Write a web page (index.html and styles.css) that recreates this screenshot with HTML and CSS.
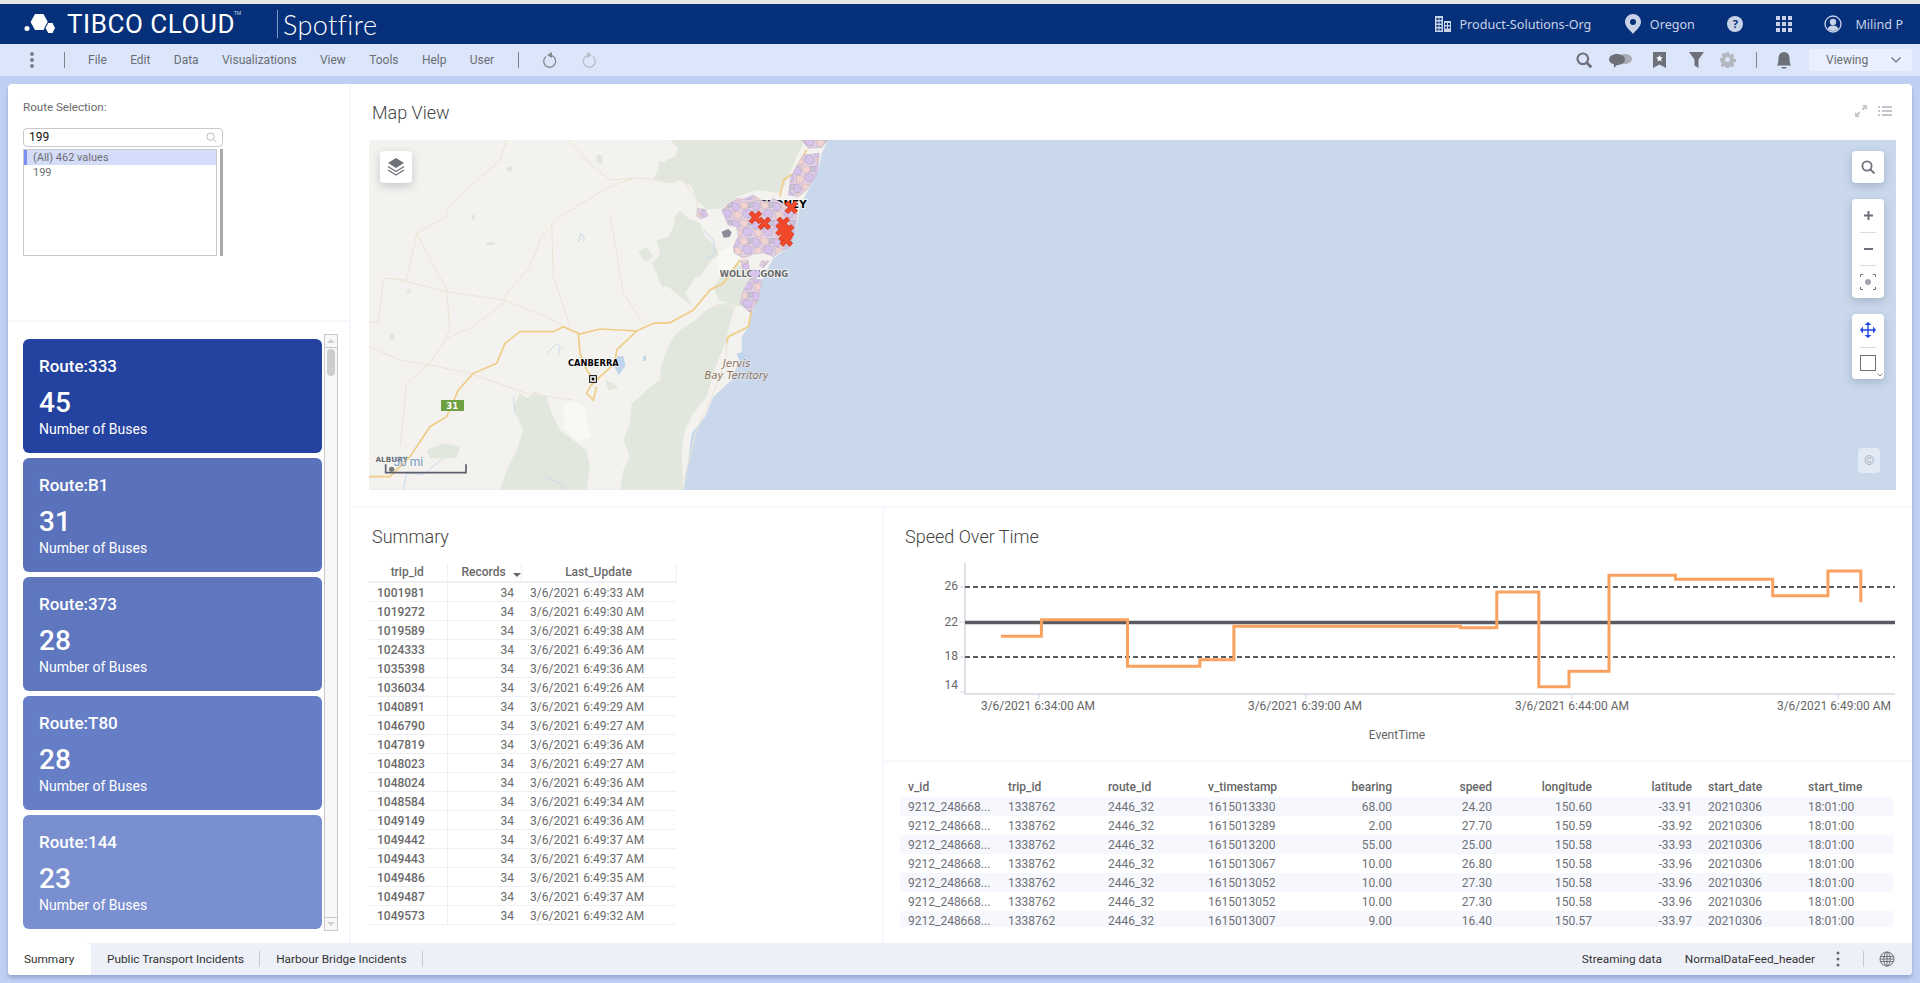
FILE: index.html
```html
<!DOCTYPE html>
<html lang="en">
<head>
<meta charset="utf-8">
<title>TIBCO Cloud Spotfire</title>
<link rel="stylesheet" href="styles.css">
</head>
<body>
<div class="app">
  <header class="topbar">
    <svg class="logo-mark" viewBox="0 0 32 20" width="32" height="20"><path fill="#fff" d="M11 1h8.500l4.300 8-4.300 8H11L6.600 9z"/><path fill="#fff" stroke="#06307a" d="M24 9.500h4.800L31.500 15l-2.700 5.500H24L21 15z"/><circle cx="3" cy="15.500" r="2.500" fill="#fff"/></svg>
    <span class="brand">TIBCO CLOUD<sup class="tm">TM</sup></span>
    <span class="brand-sep"></span>
    <span class="product">Spotfire</span>
    <nav class="top-right">
      <span class="top-item">
        <svg viewBox="0 0 17 16" width="17" height="16" fill="#c9d3e8"><path d="M1 0h8v16H1zM10 5h7v11h-7z"/><path fill="#06307a" d="M2.500 2h2v2h-2zM5.500 2h2v2h-2zM2.500 5.500h2v2h-2zM5.500 5.500h2v2h-2zM2.500 9h2v2h-2zM5.500 9h2v2h-2zM2.500 12.500h2v2h-2zM5.500 12.500h2v2h-2zM11 7h2v2h-2zM14 7h2v2h-2zM11 10.500h2v2h-2zM14 10.500h2v2h-2z"/></svg>
        Product-Solutions-Org
      </span>
      <span class="top-item">
        <svg viewBox="0 0 18 20" width="18" height="20"><path fill="#c9d3e8" d="M9 0a8 8 0 0 0-8 8c0 5 6 9 8 12 2-3 8-7 8-12a8 8 0 0 0-8-8z"/><circle cx="9" cy="8" r="3" fill="#06307a"/></svg>
        Oregon
      </span>
      <span class="help-badge">?</span>
      <svg viewBox="0 0 16 16" width="16" height="16" fill="#c9d3e8"><path d="M0 0h4v4H0zM6 0h4v4H6zM12 0h4v4h-4zM0 6h4v4H0zM6 6h4v4H6zM12 6h4v4h-4zM0 12h4v4H0zM6 12h4v4H6zM12 12h4v4h-4z"/></svg>
      <span class="top-item top-user">
        <svg viewBox="0 0 18 18" width="18" height="18"><circle cx="9" cy="9" r="8" fill="none" stroke="#c9d3e8" stroke-width="1.300"/><circle cx="9" cy="7" r="3.200" fill="#c9d3e8"/><path fill="#c9d3e8" d="M3.500 14c1-3 3-3.500 5.500-3.500s4.500.5 5.500 3.500c-3 2.500-8 2.500-11 0z"/></svg>
        Milind P
      </span>
    </nav>
  </header>

  <div class="toolbar">
    <svg class="kebab" viewBox="0 0 6 18" width="6" height="18" fill="#7b7f88"><circle cx="3" cy="3" r="2"/><circle cx="3" cy="9" r="2"/><circle cx="3" cy="15" r="2"/></svg>
    <span class="tool-sep sep-menu"></span>
    <nav class="menu">
      <span>File</span><span>Edit</span><span>Data</span><span>Visualizations</span><span>View</span><span>Tools</span><span>Help</span><span>User</span>
    </nav>
    <span class="tool-sep sep-undo"></span>
    <svg class="undo" viewBox="0 0 16 18" width="16" height="18" fill="none" stroke="#85888f" stroke-width="1.300"><path d="M4 5.500a6 6 0 1 0 6-.8"/><path fill="#85888f" stroke="none" d="M10 1v6L5 4z"/></svg>
    <svg class="redo" viewBox="0 0 16 18" width="16" height="18" fill="none" stroke="#b9bcc4" stroke-width="1.300"><path d="M12 5.500a6 6 0 1 1-6-.8"/><path fill="#b9bcc4" stroke="none" d="M6 1v6l5-3z"/></svg>
    <div class="tool-right">
      <svg viewBox="0 0 16 16" width="16" height="16" fill="none" stroke="#6e7079" stroke-width="2.200"><circle cx="6.800" cy="6.800" r="5.300"/><path d="M10.800 10.800l4.500 4.500" stroke-width="2.800"/></svg>
      <svg class="t-chat" viewBox="0 0 23 15" width="23" height="15"><ellipse cx="16" cy="6" rx="7" ry="5" fill="#a9acb5"/><path fill="#6e7079" d="M8 1c4.400 0 8 2.300 8 5.500S12.400 12 8 12l-3 3v-3.600C2 10.500 0 8.700 0 6.500 0 3.300 3.600 1 8 1z"/></svg>
      <svg class="t-mark" viewBox="0 0 13 16" width="13" height="16"><path fill="#6e7079" d="M0 0h13v16l-6.500-3.500L0 16z"/><path fill="#fff" d="M6.500 3l1 2.200 2.400.2-1.800 1.600.5 2.400-2.100-1.200-2.100 1.200.5-2.400-1.800-1.600 2.400-.2z"/></svg>
      <svg class="t-filter" viewBox="0 0 15 16" width="15" height="16"><path fill="#6e7079" d="M0 0h15L9.500 7.500V16l-4-2.500V7.500z"/></svg>
      <svg class="t-gear" viewBox="0 0 16 16" width="16" height="16"><path fill="#b4b7bf" d="M6.500 0h3l.4 2.200 1.500.7 1.900-1.200 2 2.100-1.200 1.800.7 1.500 2.200.4v3l-2.200.4-.7 1.500 1.200 1.900-2 2-1.900-1.200-1.500.7-.4 2.200h-3l-.4-2.200-1.500-.7-1.900 1.200-2-2 1.200-1.900-.7-1.500L0 9.500v-3l2.200-.4.700-1.500-1.200-1.800 2-2.100 1.900 1.200 1.500-.7z" transform="scale(.94)"/><circle cx="7.500" cy="7.500" r="2.500" fill="#dce6fb"/></svg>
      <span class="tool-sep t-sep"></span>
      <svg class="t-bell" viewBox="0 0 14 17" width="14" height="17"><path fill="#6e7079" d="M7 0a5.500 5.500 0 0 1 5.500 5.500c0 4 .5 6 1.500 8H0c1-2 1.500-4 1.500-8A5.500 5.500 0 0 1 7 0z"/><rect x="4.500" y="15" width="5" height="1.500" rx=".7" fill="#6e7079"/></svg>
      <div class="mode">Viewing
        <svg viewBox="0 0 10 6" width="10" height="6" fill="none" stroke="#6e7079" stroke-width="1.200"><path d="M.5.500L5 5 9.500.500"/></svg>
      </div>
    </div>
  </div>

  <main class="page">
    <aside class="side">
      <section class="filter">
        <div class="filter-label">Route Selection:</div>
        <div class="searchbox">199
          <svg viewBox="0 0 12 12" width="11" height="11" fill="none" stroke="#b5b5b5" stroke-width="1"><circle cx="5" cy="5" r="4"/><path d="M8 8l3.500 3.500"/></svg>
        </div>
        <div class="listwrap">
          <div class="listbox">
            <div class="opt opt-on">(All) 462 values</div>
            <div class="opt">199</div>
          </div>
          <div class="listbar"></div>
        </div>
      </section>
      <section class="kpis">
        <div class="cards">
          <article class="card c1"><div class="card-title">Route:333</div><div class="card-value">45</div><div class="card-label">Number of Buses</div></article>
          <article class="card c2"><div class="card-title">Route:B1</div><div class="card-value">31</div><div class="card-label">Number of Buses</div></article>
          <article class="card c3"><div class="card-title">Route:373</div><div class="card-value">28</div><div class="card-label">Number of Buses</div></article>
          <article class="card c4"><div class="card-title">Route:T80</div><div class="card-value">28</div><div class="card-label">Number of Buses</div></article>
          <article class="card c5"><div class="card-title">Route:144</div><div class="card-value">23</div><div class="card-label">Number of Buses</div></article>
        </div>
        <div class="vscroll">
          <div class="vs-btn"><i class="arrow-up"></i></div>
          <div class="vs-track"><div class="vs-thumb"></div></div>
          <div class="vs-btn vs-btn-end"><i class="arrow-down"></i></div>
        </div>
      </section>
    </aside>

    <div class="content">
      <section class="mapview">
        <div class="vis-head">
          <h2 class="vis-title">Map View</h2>
          <div class="vis-tools">
            <svg viewBox="0 0 12 12" width="12" height="12" fill="#c3c6cd"><path d="M7 0h5v5l-1.800-1.800L8 5.400 6.600 4l2.200-2.200zM5 12H0V7l1.800 1.800L4 6.600 5.400 8l-2.200 2.200z"/></svg>
            <svg viewBox="0 0 14 10" width="14" height="10" fill="#c3c6cd"><path d="M0 0h2v2H0zM4 0h10v2H4zM0 4h2v2H0zM4 4h10v2H4zM0 8h2v2H0zM4 8h10v2H4z"/></svg>
          </div>
        </div>
        <div class="map">
          <svg class="map-art" viewBox="0 0 1527 350" width="1527" height="350">
            <defs>
              <path id="b1" d="M0 8L7 0l11 2 7-3 10 9-4 9 4 8-10 8-10-2-9 4-6-9-6-6z"/>
              <path id="b2" d="M0 5l9-6 8 3 9-2 5 10-4 8-10 6-10-3-8-5z"/>
              <pattern id="suburbs" patternUnits="userSpaceOnUse" width="62" height="54">
                <rect width="62" height="54" fill="#e2cfe2"/>
                <path fill="#d6c2ea" stroke="#a79fb8" stroke-width="1.500" d="M0 0l16 3 8 12-10 12L0 24zM34 26l14-4 14 8-4 16-16 2-10-10z"/>
                <path fill="#f1d3d2" stroke="#bfa9b1" stroke-width="1.500" d="M24 0h20l6 14-12 8-14-7zM6 30l12-3 12 10-6 14-16-2z"/>
                <path fill="#c9c4d6" stroke="#a79fb8" stroke-width="1.500" d="M50 0h12v14l-12 4z"/>
              </pattern>
            </defs>
            <rect width="1527" height="350" fill="#c9d8eb"/>
            <g transform="translate(-9 -10) scale(.33333)">
              <path fill="#f3f2ef" d="M27 30L1405 30 1385 70 1375 120 1345 180 1320 230 1310 290 1290 350 1240 385 1205 450 1195 510 1170 555 1165 590 1145 620 1145 670 1115 750 1060 800 1035 860 995 910 985 990 970 1079 27 1079z"/>
              <g fill="#e2e7de">
                <path d="M930 30L1335 30 1310 80 1290 130 1262 190 1190 180 1130 200 1085 235 1040 240 1010 210 995 170 960 150 930 160 880 150 890 125 920 90 945 80 955 55z"/>
                <path d="M960 240L985 265 1020 280 1035 320 1060 340 1080 370 1050 395 1020 440 1005 445 975 490 1000 530 960 500 925 470 905 470 890 430 875 400 900 375 890 330 925 320 940 290 945 260z"/>
                <path d="M1080 520L1125 530 1110 580 1095 640 1075 690 1060 730 1040 800 1015 830 1000 850 975 900 965 960 970 1079 780 1079 790 1020 810 980 790 930 810 880 815 820 840 800 860 780 900 750 905 700 920 660 940 620 960 600 1000 575 1040 540z"/>
                <path d="M480 790L500 805 525 785 560 800 575 850 600 900 640 930 680 960 690 1010 680 1079 420 1079 440 1020 470 960 490 900 465 850 460 830z"/>
                <path d="M1090 430L1130 400 1190 440 1180 500 1140 530 1075 510 1060 470z"/>
                <path d="M200 960L250 940 300 950 290 985 210 985z"/>
                <path d="M835 365l25-15 20 30-25 15z"/>
                <path d="M735 750l25 10 15 15-30 5z"/>
                <path d="M440 110h18v14h-18zM335 255h10v15h-10zM88 610h16v20H88zM140 478h12v12h-12zM380 335h25v10h-25zM710 75h18v25h-18zM895 95h30v45h-30z"/>
              </g>
              <path fill="#f8f8f5" d="M1075 365l50-20 15 35-30 50-35 10zM610 830l25-20 40 20 15 90-40 15-35-40z"/>
              <g fill="none" stroke="#ebe4d4" stroke-width="3">
                <path d="M440 30L420 90 330 170 260 240 260 260 170 310 140 450 70 445 55 580 27 575"/>
                <path d="M625 30L690 100 750 150 820 145 970 150 1010 210 1015 235"/>
                <path d="M820 145L740 175 600 260 545 320 510 410 440 490 430 520 340 590 260 625 210 700 140 760 120 950"/>
                <path d="M27 650L120 690 210 705 330 730"/>
                <path d="M100 445L260 485 430 510 560 560 630 600"/>
                <path d="M170 310L260 480 270 600 255 625"/>
                <path d="M750 250l40 240 60 90M575 280L580 440 630 590"/>
                <path d="M1040 540L1100 520 1130 530M1100 620L1100 680 1060 790 1010 900 985 1000 960 1079"/>
                <path d="M660 670L680 720M330 730L500 790 640 810"/>
              </g>
              <g fill="none" stroke="#c6daee" stroke-width="3">
                <path d="M655 335l8-25 10 15-3 10M560 670l30-30 20 20M600 650l-5 25M460 800l5 50M1030 300l30 30 5 40-30 20M130 1079l10-50 50 5 60-50M560 1040l40 20 20 19"/>
              </g>
              <path fill="#bdd4ea" d="M770 680l20-2 6 30-20 28-12-25z"/>
              <path fill="#bdd4ea" d="M1130 670l20-4 8 16-20 10zM850 680l8-4v16l-8 2z"/>
              <g fill="none" stroke="#f0cd86" stroke-width="5">
                <path d="M27 1040L90 1040 150 980 210 890 260 860 295 780 340 730 410 700 435 640 480 605 580 605 610 590 660 612 720 597 830 603 880 580 930 578 1000 540 1050 480 1090 460 1140 390"/>
                <path d="M830 603L770 660 765 700 720 740 690 770 680 790 700 810 710 770"/>
                <path d="M655 612L660 670 680 720 700 745"/>
                <path d="M1175 540L1165 590 1105 620 1100 640"/>
                <path d="M1260 200L1270 150 1300 130 1340 60"/>
              </g>
              <text class="map-label-city" x="1270" y="234" text-anchor="middle">SYDNEY</text>
              <g fill="url(#suburbs)" stroke="#bfb3c8" stroke-width="1.500">
                <path d="M1085 240L1105 222 1130 205 1150 208 1180 195 1205 212 1228 215 1240 205 1272 222 1290 240 1312 250 1305 300 1290 350 1262 365 1240 380 1210 368 1180 372 1150 385 1122 368 1120 350 1135 318 1130 290 1105 285z"/>
                <path d="M1325 30L1405 30 1385 52 1345 55z"/>
                <path d="M1330 75L1378 70 1372 130 1340 180 1315 200 1285 195 1292 140z"/>
                <path d="M1172 445L1205 450 1195 510 1170 548 1140 520 1150 480z"/>
                <path d="M1012 235l24 4 8 18-20 10-14-8z"/>
                <path d="M1142 392l22-2 4 26-20 4zM1205 392l22 2-18 20-10-8z"/>
              </g>
              <path fill="#8a8d99" d="M1085 305l20-8 10 10-6 14-18 2z"/>
              <text class="map-label-town" x="1182" y="442" text-anchor="middle">WOLLONGONG</text>
              <use href="#b2" transform="translate(1170 420)" fill="#d9c6ec" stroke="#a69cc0"/>
              <g fill="none">
                <g stroke="#b8321c" stroke-width="14">
                  <path d="M1171 247l30 30m0-30l-30 30M1198 265l30 30m0-30l-30 30M1279 217l30 30m0-30l-30 30M1255 265l30 30m0-30l-30 30M1251 283l30 30m0-30l-30 30M1268 288l30 30m0-30l-30 30M1260 301l30 30m0-30l-30 30M1264 315l30 30m0-30l-30 30"/>
                </g>
                <g stroke="#f2492c" stroke-width="11">
                  <path d="M1171 247l30 30m0-30l-30 30M1198 265l30 30m0-30l-30 30M1279 217l30 30m0-30l-30 30M1255 265l30 30m0-30l-30 30M1251 283l30 30m0-30l-30 30M1268 288l30 30m0-30l-30 30M1260 301l30 30m0-30l-30 30M1264 315l30 30m0-30l-30 30"/>
                </g>
              </g>
              <text class="map-label-city map-label-cbr" x="700" y="707" text-anchor="middle">CANBERRA</text>
              <rect x="689" y="737" width="20" height="20" fill="#fff" stroke="#000" stroke-width="3"/>
              <rect x="695" y="743" width="8" height="8" fill="#000"/>
              <text class="map-label-water" x="1130" y="712" text-anchor="middle">Jervis</text>
              <text class="map-label-water" x="1130" y="747" text-anchor="middle">Bay Territory</text>
              <rect x="243" y="810" width="69" height="33" fill="#6fa142"/>
              <text class="map-label-shield" x="277" y="836" text-anchor="middle">31</text>
              <text class="map-label-small" x="95" y="997" text-anchor="middle">ALBURY</text>
              <text class="map-scale" x="100" y="1008">50 mi</text>
              <path d="M77 1003V1028H318V1003" fill="none" stroke="#5d606c" stroke-width="5"/>
              <circle cx="95" cy="1018" r="8" fill="#777"/>
            </g>
          </svg>
          <button class="ctl ctl-layers" aria-label="Layers">
            <svg viewBox="0 0 18 18" width="18" height="18"><path fill="#6e7079" d="M9 0l8 5-8 5-8-5z"/><path fill="none" stroke="#6e7079" stroke-width="1.200" d="M1 8.500l8 5 8-5M1 12l8 5 8-5"/></svg>
          </button>
          <div class="ctl-stack">
            <button class="ctl" aria-label="Search">
              <svg viewBox="0 0 14 14" width="14" height="14" fill="none" stroke="#6e7079" stroke-width="1.800"><circle cx="6" cy="6" r="4.600"/><path d="M9.500 9.500l4 4"/></svg>
            </button>
            <div class="ctl-group ctl-zoom">
              <div class="ctl-cell"><svg viewBox="0 0 9 9" width="9" height="9" fill="#6e7079"><path d="M3.500 0h2v3.500H9v2H5.500V9h-2V5.500H0v-2h3.500z"/></svg></div>
              <div class="ctl-cell"><svg viewBox="0 0 9 2" width="9" height="2" fill="#6e7079"><path d="M0 0h9v2H0z"/></svg></div>
              <div class="ctl-cell"><svg viewBox="0 0 16 16" width="16" height="16" fill="none" stroke="#6e7079"><path d="M.5 3V.500H3M13 .500h2.500V3M15.500 13v2.500H13M3 15.500H.500V13"/><circle cx="8" cy="8" r="3" fill="#a3a5ad" stroke="none"/></svg></div>
            </div>
            <div class="ctl-group ctl-pan">
              <div class="ctl-cell"><svg viewBox="0 0 16 16" width="16" height="16" fill="#1f47e0"><path d="M7.300 3h1.400v4.300H13V4.500L16 8l-3 3.500V8.700H8.700V13h2.800L8 16l-3.500-3h2.800V8.700H3v2.800L0 8l3-3.500v2.800h4.300V3H4.500L8 0l3.500 3z"/></svg></div>
              <div class="ctl-cell"><span class="ctl-box"></span><svg class="ctl-caret" viewBox="0 0 6 4" width="6" height="4" fill="none" stroke="#888"><path d="M.5.500L3 3 5.500.500"/></svg></div>
            </div>
          </div>
          <div class="map-copy">©</div>
        </div>
      </section>

      <div class="lower">
        <section class="summary">
          <h2 class="vis-title">Summary</h2>
          <table class="sum-table">
            <colgroup><col class="col-a"><col class="col-b"><col class="col-c"></colgroup>
            <thead><tr><th>trip_id</th><th class="th-sort">Records<i class="sort-caret"></i></th><th>Last_Update</th></tr></thead>
            <tbody>
              <tr><td>1001981</td><td>34</td><td>3/6/2021 6:49:33 AM</td></tr>
              <tr><td>1019272</td><td>34</td><td>3/6/2021 6:49:30 AM</td></tr>
              <tr><td>1019589</td><td>34</td><td>3/6/2021 6:49:38 AM</td></tr>
              <tr><td>1024333</td><td>34</td><td>3/6/2021 6:49:36 AM</td></tr>
              <tr><td>1035398</td><td>34</td><td>3/6/2021 6:49:36 AM</td></tr>
              <tr><td>1036034</td><td>34</td><td>3/6/2021 6:49:26 AM</td></tr>
              <tr><td>1040891</td><td>34</td><td>3/6/2021 6:49:29 AM</td></tr>
              <tr><td>1046790</td><td>34</td><td>3/6/2021 6:49:27 AM</td></tr>
              <tr><td>1047819</td><td>34</td><td>3/6/2021 6:49:36 AM</td></tr>
              <tr><td>1048023</td><td>34</td><td>3/6/2021 6:49:27 AM</td></tr>
              <tr><td>1048024</td><td>34</td><td>3/6/2021 6:49:36 AM</td></tr>
              <tr><td>1048584</td><td>34</td><td>3/6/2021 6:49:34 AM</td></tr>
              <tr><td>1049149</td><td>34</td><td>3/6/2021 6:49:36 AM</td></tr>
              <tr><td>1049442</td><td>34</td><td>3/6/2021 6:49:37 AM</td></tr>
              <tr><td>1049443</td><td>34</td><td>3/6/2021 6:49:37 AM</td></tr>
              <tr><td>1049486</td><td>34</td><td>3/6/2021 6:49:35 AM</td></tr>
              <tr><td>1049487</td><td>34</td><td>3/6/2021 6:49:37 AM</td></tr>
              <tr><td>1049573</td><td>34</td><td>3/6/2021 6:49:32 AM</td></tr>
            </tbody>
          </table>
        </section>
        <div class="right-col">
          <section class="speed">
            <h2 class="vis-title">Speed Over Time</h2>
            <svg class="chart" viewBox="885 563 1027 197" width="1027" height="197">
              <path d="M966 563V694H1896" fill="none" stroke="#d5d7e2" stroke-width="1.500"/>
              <path d="M961 587h5M961 622h5M961 657h5M961 692h5M1040 694v5M1307 694v5M1573 694v5M1839 694v5" stroke="#d5d7e2"/>
              <path d="M966 587H1896M966 657H1896" stroke="#5a5b60" stroke-width="2" stroke-dasharray="5 3"/>
              <path d="M966 622.500H1896" stroke="#5a5b60" stroke-width="3.500"/>
              <path d="M1002 636.300H1042.400V619.700H1128.500V666.300H1200.800V659.700H1234.900V626.300H1461.600V627.700H1497.800V592H1539.800V686.700H1570V671.300H1610V575.300H1676.500V579.300H1773.700V595.700H1828.900V571H1861.800V602.300" fill="none" stroke="#f9a15e" stroke-width="3"/>
              <g class="chart-text" text-anchor="end">
                <text x="959" y="590">26</text><text x="959" y="626">22</text><text x="959" y="660">18</text><text x="959" y="689">14</text>
              </g>
              <g class="chart-text" text-anchor="middle">
                <text x="1039" y="710">3/6/2021 6:34:00 AM</text>
                <text x="1306" y="710">3/6/2021 6:39:00 AM</text>
                <text x="1573" y="710">3/6/2021 6:44:00 AM</text>
                <text x="1835" y="710">3/6/2021 6:49:00 AM</text>
                <text x="1398" y="739">EventTime</text>
              </g>
            </svg>
          </section>
          <section class="detail">
            <div class="d-row d-head"><span>v_id</span><span>trip_id</span><span>route_id</span><span>v_timestamp</span><span class="num">bearing</span><span class="num">speed</span><span class="num">longitude</span><span class="num">latitude</span><span>start_date</span><span>start_time</span></div>
            <div class="d-body">
              <div class="d-row"><span>9212_248668...</span><span>1338762</span><span>2446_32</span><span>1615013330</span><span class="num">68.00</span><span class="num">24.20</span><span class="num">150.60</span><span class="num">-33.91</span><span>20210306</span><span>18:01:00</span></div>
              <div class="d-row"><span>9212_248668...</span><span>1338762</span><span>2446_32</span><span>1615013289</span><span class="num">2.00</span><span class="num">27.70</span><span class="num">150.59</span><span class="num">-33.92</span><span>20210306</span><span>18:01:00</span></div>
              <div class="d-row"><span>9212_248668...</span><span>1338762</span><span>2446_32</span><span>1615013200</span><span class="num">55.00</span><span class="num">25.00</span><span class="num">150.58</span><span class="num">-33.93</span><span>20210306</span><span>18:01:00</span></div>
              <div class="d-row"><span>9212_248668...</span><span>1338762</span><span>2446_32</span><span>1615013067</span><span class="num">10.00</span><span class="num">26.80</span><span class="num">150.58</span><span class="num">-33.96</span><span>20210306</span><span>18:01:00</span></div>
              <div class="d-row"><span>9212_248668...</span><span>1338762</span><span>2446_32</span><span>1615013052</span><span class="num">10.00</span><span class="num">27.30</span><span class="num">150.58</span><span class="num">-33.96</span><span>20210306</span><span>18:01:00</span></div>
              <div class="d-row"><span>9212_248668...</span><span>1338762</span><span>2446_32</span><span>1615013052</span><span class="num">10.00</span><span class="num">27.30</span><span class="num">150.58</span><span class="num">-33.96</span><span>20210306</span><span>18:01:00</span></div>
              <div class="d-row"><span>9212_248668...</span><span>1338762</span><span>2446_32</span><span>1615013007</span><span class="num">9.00</span><span class="num">16.40</span><span class="num">150.57</span><span class="num">-33.97</span><span>20210306</span><span>18:01:00</span></div>
            </div>
          </section>
        </div>
      </div>
    </div>

    <footer class="tabbar">
      <span class="tab tab-on">Summary</span>
      <span class="tab tab-a">Public Transport Incidents</span>
      <span class="tab tab-b">Harbour Bridge Incidents</span>
      <div class="status">
        <span class="st-stream">Streaming data</span>
        <span class="st-feed">NormalDataFeed_header</span>
        <svg class="st-dots" viewBox="0 0 4 16" width="4" height="16" fill="#666a72"><circle cx="2" cy="2" r="1.500"/><circle cx="2" cy="8" r="1.500"/><circle cx="2" cy="14" r="1.500"/></svg>
        <span class="st-sep"></span>
        <svg class="st-globe" viewBox="0 0 16 16" width="16" height="16" fill="none" stroke="#6e7079"><circle cx="8" cy="8" r="7"/><ellipse cx="8" cy="8" rx="3.200" ry="7"/><path d="M8 1v14M1.500 5.500h13M1.500 10.500h13M1 8h14"/></svg>
      </div>
    </footer>
  </main>
</div>
</body>
</html>
```

FILE: styles.css
```css
* { box-sizing: border-box; }
html, body { margin: 0; padding: 0; height: 100%; }
body { background: #c0d0f5; font-family: Roboto, "Liberation Sans", sans-serif; font-size: 12px; color: #666; overflow: hidden; }
.app { display: flex; flex-direction: column; height: 983px; }

/* top bar */
.topbar { flex: none; height: 44px; border-top: 4px solid #e6e6e6; background: #06307a; display: flex; align-items: center; padding-left: 24px; padding-right: 17px; color: #fff; }
.logo-mark { flex: none; margin-top: -2px; }
.brand { font-family: Roboto, sans-serif; font-size: 26px; font-weight: 400; margin-left: 11px; white-space: nowrap; line-height: 30px; position: relative; letter-spacing: .55px; }
.tm { font-size: 5px; position: absolute; top: 1px; right: -6px; line-height: 6px; color: #c9d3e8; letter-spacing: 0; }
.brand-sep { width: 1px; height: 28px; background: #7f97c4; margin-left: 42px; }
.product { font-family: Lato, sans-serif; font-weight: 300; font-size: 27px; margin-left: 5px; letter-spacing: .4px; }
.top-right { margin-left: auto; display: flex; align-items: center; gap: 32.500px; font-family: "Noto Sans", sans-serif; font-size: 12.600px; color: #c9d3e8; }
.top-item { display: flex; align-items: center; gap: 8px; white-space: nowrap; }
.top-user { gap: 13px; }
.help-badge { width: 16px; height: 16px; border-radius: 50%; background: #c9d3e8; color: #06307a; font-size: 11px; font-weight: 700; line-height: 16px; text-align: center; }

/* toolbar */
.toolbar { flex: none; height: 32px; background: #dce6fb; display: flex; align-items: center; padding-left: 29px; padding-right: 8px; }
.tool-sep { width: 1px; height: 16px; background: #7f828a; flex: none; }
.sep-menu { margin-left: 29px; }
.menu { display: flex; gap: 23.300px; margin-left: 23px; color: #6a6d75; font-size: 12px; }
.sep-undo { margin-left: 23.500px; }
.undo { margin-left: 23px; }
.redo { margin-left: 23px; }
.tool-right { margin-left: auto; display: flex; align-items: center; }
.t-chat { margin-left: 17px; }
.t-mark { margin-left: 21px; }
.t-filter { margin-left: 23px; }
.t-gear { margin-left: 16px; }
.t-sep { margin-left: 20px; }
.t-bell { margin-left: 20px; }
.mode { margin-left: 18px; width: 103px; height: 22px; background: #e9effc; border-radius: 3px; display: flex; align-items: center; justify-content: space-between; padding: 0 11px 0 17px; color: #6a6d75; font-size: 12px; }

/* page */
.page { flex: none; margin: 8px 8px 0; height: 891px; background: #fff; border-radius: 4px; display: grid; grid-template-columns: 343px 1fr; grid-template-rows: 859px 32px; box-shadow: 0 3px 4px rgba(70, 90, 150, .35); overflow: hidden; }

/* side */
.side { border-right: 2px solid #f7f8fe; display: flex; flex-direction: column; min-height: 0; }
.filter { flex: none; height: 238px; border-bottom: 2px solid #f7f8fe; padding: 15px 0 0 15px; }
.filter-label { line-height: 16px; font-size: 11.600px; color: #6a6a6a; }
.searchbox { margin-top: 13px; width: 200px; height: 19px; border: 1px solid #c9c9c9; border-radius: 4px; padding: 0 5px; display: flex; align-items: center; justify-content: space-between; color: #111; font-size: 12px; line-height: 17px; }
.listwrap { display: flex; gap: 3px; margin-top: 2px; height: 107px; }
.listbox { width: 194px; border: 1px solid #c9c9c9; padding: 0; }
.listbar { width: 3px; background: #a9a9a9; }
.opt { height: 15px; line-height: 15px; padding-left: 9px; color: #6e6e6e; font-size: 11px; }
.opt-on { background: #d4dcfa; border-left: 3px solid #7b8ff5; padding-left: 6px; }

.kpis { flex: 1; display: flex; padding-left: 15px; min-height: 0; }
.cards { margin-top: 17px; width: 299px; height: 590px; display: flex; flex-direction: column; gap: 5px; overflow: hidden; }
.card { flex: none; height: 114px; border-radius: 6px; padding: 17px 16px 0; color: #fff; }
.c1 { background: #24429f; }
.c2 { background: #5a72bb; }
.c3 { background: #5e77bf; }
.c4 { background: #657ec5; }
.c5 { background: #798fd0; }
.card-title { font-size: 17px; line-height: 20px; font-weight: 500; }
.card-value { margin-top: 10px; font-size: 28px; line-height: 34px; font-weight: 500; }
.card-label { font-size: 14px; line-height: 18px; }
.vscroll { margin: 12px 0 0 2px; width: 14px; height: 597px; border: 1px solid #c9c9c9; background: #f8f8f8; display: flex; flex-direction: column; }
.vs-btn { flex: none; height: 13px; border-bottom: 1px solid #c9c9c9; display: flex; align-items: center; justify-content: center; }
.vs-btn-end { border-bottom: 0; border-top: 1px solid #c9c9c9; }
.vs-track { flex: 1; padding: 1px 2px; }
.vs-thumb { height: 27px; background: #cdcdcd; border-radius: 4px; }
.arrow-up { width: 0; height: 0; border: 4px solid transparent; border-top: 0; border-bottom: 4px solid #d0d0d0; }
.arrow-down { width: 0; height: 0; border: 4px solid transparent; border-bottom: 0; border-top: 4px solid #d0d0d0; }

/* content */
.content { min-width: 0; min-height: 0; display: flex; flex-direction: column; }
.mapview { flex: none; height: 422px; }
.vis-head { height: 56px; display: flex; align-items: center; justify-content: space-between; padding: 1px 20px 0 21px; }
.vis-title { margin: 0; font-size: 18px; line-height: 24px; font-weight: 300; color: #444; }
.vis-tools { display: flex; gap: 11px; align-items: center; margin-top: -3px; }
.map { position: relative; margin: 0 16px 0 18px; height: 350px; overflow: hidden; }
.map-art { display: block; }
.map-label-city { font: 700 31px "DejaVu Sans", sans-serif; fill: #000; stroke: #fff; stroke-width: 5px; paint-order: stroke; stroke-opacity: .8; }
.map-label-cbr { font-size: 25px; }
.map-label-town { font: 700 25px "DejaVu Sans", sans-serif; fill: #666; stroke: #fff; stroke-width: 5px; paint-order: stroke; stroke-opacity: .8; }
.map-label-small { font: 700 22px "DejaVu Sans", sans-serif; fill: #6a6a6a; stroke: #fff; stroke-width: 4px; paint-order: stroke; stroke-opacity: .7; }
.map-label-water { font: italic 400 30px "DejaVu Sans", sans-serif; fill: #8d6e5a; stroke: #fff; stroke-width: 3px; paint-order: stroke; stroke-opacity: .5; }
.map-label-shield { font: 700 26px "DejaVu Sans", sans-serif; fill: #fff; }
.map-scale { font: 400 36px Roboto, sans-serif; fill: #7c9cc6; }
.ctl { width: 32px; height: 32px; padding: 0; border: 0; background: #fff; border-radius: 4px; display: flex; align-items: center; justify-content: center; box-shadow: 0 3px 9px rgba(60, 70, 100, .25); }
.ctl-layers { position: absolute; left: 11px; top: 11px; }
.ctl-stack { position: absolute; right: 12px; top: 11px; display: flex; flex-direction: column; gap: 16px; }
.ctl-group { width: 32px; background: #fff; border-radius: 4px; box-shadow: 0 3px 9px rgba(60, 70, 100, .25); display: flex; flex-direction: column; align-items: center; }
.ctl-cell { position: relative; width: 32px; height: 33px; display: flex; align-items: center; justify-content: center; }
.ctl-cell + .ctl-cell::before { content: ""; position: absolute; top: 0; left: 8px; right: 8px; height: 1px; background: #dcdde2; }
.ctl-pan .ctl-cell { height: 32.500px; }
.ctl-box { width: 16px; height: 16px; border: 1px solid #6e7079; }
.ctl-caret { position: absolute; right: 1px; bottom: 2px; }
.map-copy { position: absolute; right: 16px; top: 308px; width: 22px; height: 25px; border-radius: 4px; background: rgba(255, 255, 255, .45); color: #a9b0bf; font-size: 13px; display: flex; align-items: center; justify-content: center; }

/* lower */
.lower { flex: 1; min-height: 0; display: grid; grid-template-columns: 533px 1fr; border-top: 2px solid #f7f8fe; }
.summary { border-right: 2px solid #f7f8fe; padding: 17px 0 0 17px; }
.summary .vis-title { padding-left: 4px; margin-bottom: 14px; }
.sum-table { border-collapse: collapse; table-layout: fixed; width: 308px; font-size: 12px; }
.col-a { width: 79px; }
.col-b { width: 74px; }
.col-c { width: 155px; }
.sum-table th { height: 19px; padding: 0; font-weight: 500; color: #6a6a6a; text-align: center; border-right: 1px solid #eef0f6; border-bottom: 2px solid #eef0f6; font-size: 12px; }
.sum-table .th-sort { padding-left: 14px; text-align: left; white-space: nowrap; }
.sort-caret { display: inline-block; width: 0; height: 0; margin-left: 7px; border: 4px solid transparent; border-bottom: 0; border-top: 4px solid #666; vertical-align: -1px; }
.sum-table td { padding: 3px 7px 0 9px; line-height: 15px; border-bottom: 1px solid #eef0f6; color: #6a6a6a; white-space: nowrap; }
.sum-table td:nth-child(1) { font-weight: 500; border-right: 1px solid #eef0f6; }
.sum-table td:nth-child(2) { text-align: right; }
.right-col { min-width: 0; min-height: 0; display: grid; grid-template-rows: 252px 1fr; }
.speed { min-height: 0; }
.speed .vis-title { padding: 17px 0 14px 21px; }
.chart { display: block; }
.chart-text text { font: 400 12px Roboto, sans-serif; fill: #666; }
.detail { border-top: 2px solid #f7f8fe; padding: 0 19px 0 16px; min-height: 0; }
.d-row { display: grid; grid-template-columns: repeat(9, 100px) 92px; height: 19px; line-height: 21px; }
.d-row span { padding: 0 8px; white-space: nowrap; overflow: hidden; color: #6e7078; }
.d-row .num { text-align: right; }
.d-head { height: 35px; line-height: 18px; padding-top: 16px; }
.d-head span { font-weight: 500; color: #666; }
.d-body { height: 130px; overflow: hidden; }
.d-body .d-row:nth-child(odd) { background: #f7f8fd; }

/* tabs */
.tabbar { grid-column: 1 / -1; background: #edf0f8; display: flex; align-items: center; color: #333; font-size: 11.800px; }
.tab { height: 32px; line-height: 32px; white-space: nowrap; }
.tab-on { width: 83px; background: #fff; padding-left: 16px; border-radius: 0 4px 0 0; }
.tab-a { margin-left: 16px; padding-right: 16px; position: relative; }
.tab-b { margin-left: 0; padding: 0 16px; position: relative; }
.tab-a::after, .tab-b::after { content: ""; position: absolute; right: 0; top: 8px; height: 16px; width: 1px; background: #c6c9d2; }
.status { margin-left: auto; display: flex; align-items: center; padding-right: 17px; }
.st-feed { margin-left: 23px; }
.st-dots { margin-left: 21px; }
.st-sep { width: 1px; height: 16px; background: #c6c9d2; margin-left: 23px; }
.st-globe { margin-left: 15px; }
```
